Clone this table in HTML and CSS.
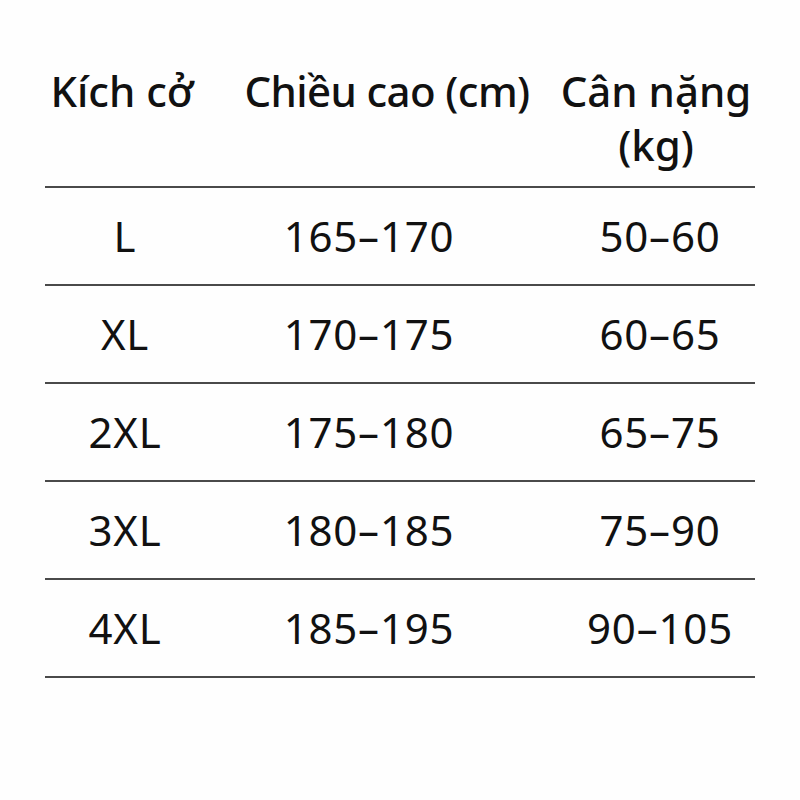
FILE: index.html
```html
<!DOCTYPE html>
<html lang="vi">
<head>
<meta charset="utf-8">
<link rel="stylesheet" href="styles.css">
</head>
<body>
<div class="chart">
  <div class="row head">
    <div class="c1">Kích cở</div>
    <div class="c2">Chiều cao (cm)</div>
    <div class="c3">Cân nặng<br>(kg)</div>
  </div>
  <div class="row"><div class="c1">L</div><div class="c2">165–170</div><div class="c3">50–60</div></div>
  <div class="row"><div class="c1">XL</div><div class="c2">170–175</div><div class="c3">60–65</div></div>
  <div class="row"><div class="c1">2XL</div><div class="c2">175–180</div><div class="c3">65–75</div></div>
  <div class="row"><div class="c1">3XL</div><div class="c2">180–185</div><div class="c3">75–90</div></div>
  <div class="row"><div class="c1">4XL</div><div class="c2">185–195</div><div class="c3">90–105</div></div>
</div>
</body>
</html>
```

FILE: styles.css
```css
html, body {
  margin: 0;
  padding: 0;
  background: #fefefe;
}
body {
  font-family: "Noto Sans", "Open Sans", sans-serif;
  color: #111;
}
.chart {
  width: 710px;
  margin-left: 45px;
}
.row {
  display: grid;
  grid-template-columns: 154px 352px 204px;
  text-align: center;
  font-size: 42px;
  line-height: 96px;
  letter-spacing: 0.8px;
  border-bottom: 2px solid #4a4a4a;
}
.row .c1 { padding-left: 6px; }
.row .c2 { padding-right: 12px; }
.row .c3 { padding-left: 14px; }
.head {
  line-height: 54px;
  font-weight: 500;
  letter-spacing: 0;
  padding-top: 64px;
  padding-bottom: 14px;
}
.head .c1 { padding-left: 0; }
.head .c2 { padding-right: 0; padding-left: 24px; letter-spacing: -0.6px; }
.head .c3 { padding-left: 6px; }
```
